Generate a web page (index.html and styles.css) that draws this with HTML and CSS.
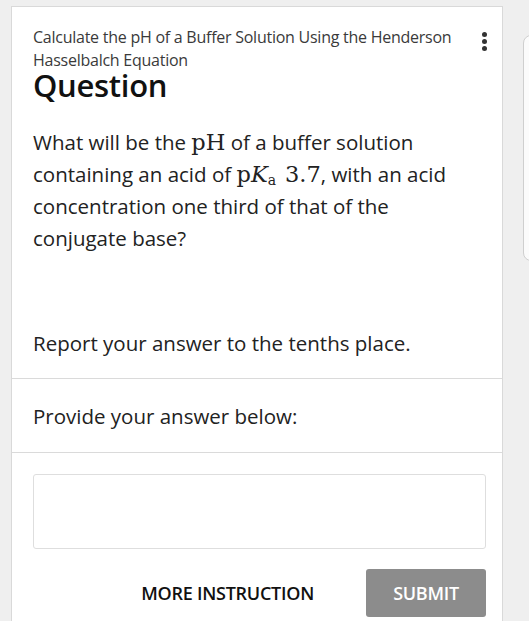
FILE: index.html
```html
<!DOCTYPE html>
<html lang="en">
<head>
    <meta charset="UTF-8">
    <title>Question</title>
    <link rel="stylesheet" href="styles.css">
</head>
<body>
    <div class="page">
        <!-- Question Card -->
        <div class="card">
            <div class="card-head">
                <div class="head-text">
                    <div class="topic">Calculate the pH of a Buffer Solution Using the Henderson Hasselbalch Equation</div>
                    <h1>Question</h1>
                </div>
                <div class="kebab"><span></span><span></span><span></span></div>
            </div>

            <div class="section prompt">
                <p class="question">What will be the <span class="math">pH</span> of a buffer solution containing an acid of <span class="math">p<i>K</i><sub>a</sub><span class="num">3.7</span></span>, with an acid concentration one third of that of the conjugate base?</p>
                <p class="note">Report your answer to the tenths place.</p>
            </div>

            <div class="section label-row">
                <p>Provide your answer below:</p>
            </div>

            <div class="section answer">
                <div class="answer-box"></div>
                <div class="actions">
                    <button class="link-btn">MORE INSTRUCTION</button>
                    <button class="submit-btn">SUBMIT</button>
                </div>
            </div>
        </div>

        <!-- Side panel (cut off) -->
        <div class="side-panel"></div>
    </div>
</body>
</html>
```

FILE: styles.css
```css
/* Global */
body {
    margin: 0;
    padding: 0;
    background: #efefef;
    font-family: 'Open Sans', 'Noto Sans', sans-serif;
    color: #222;
    overflow: hidden;
}

.page {
    display: flex;
    align-items: flex-start;
    padding: 6px 0 0 11px;
    gap: 20px;
}

/* Card */
.card {
    background: #fff;
    width: 490px;
    flex-shrink: 0;
    border: 1px solid #d9d9d9;
    border-bottom: none;
    min-height: 640px;
}

.card-head {
    display: flex;
    justify-content: space-between;
    padding: 19px 15px 0 21px;
}

.topic {
    font-size: 16px;
    letter-spacing: -0.25px;
    line-height: 23px;
    color: #3a3a3a;
    width: 430px;
}

.card-head h1 {
    margin: -4px 0 0 0;
    font-size: 31px;
    font-weight: 600;
    line-height: 34px;
    color: #111;
    letter-spacing: -0.3px;
}

.kebab {
    display: flex;
    flex-direction: column;
    gap: 2px;
    padding-top: 6px;
}

.kebab span {
    width: 5px;
    height: 5px;
    border-radius: 50%;
    background: #333;
}

/* Sections */
.section {
    padding: 0 16px 0 21px;
}

.section p {
    margin: 0;
    font-size: 20.5px;
    line-height: 32px;
}

.prompt {
    padding-top: 24px;
    padding-bottom: 19px;
    border-bottom: 1px solid #dadada;
}

.math {
    font-family: 'DejaVu Serif', 'Liberation Serif', serif;
    font-size: 22.5px;
    line-height: 0;
}

.math sub {
    font-size: 14px;
    vertical-align: -3px;
    line-height: 0;
}

.math .num {
    margin-left: 9px;
}

.note {
    margin-top: 73px !important;
}

.label-row {
    padding-top: 21px;
    padding-bottom: 20px;
    border-bottom: 1px solid #dadada;
}

.answer {
    padding-top: 21px;
}

.answer-box {
    height: 73px;
    border: 1px solid #dedede;
    border-radius: 3px;
}

.actions {
    display: flex;
    justify-content: flex-end;
    align-items: center;
    gap: 52px;
    margin-top: 20px;
}

.link-btn {
    background: none;
    border: none;
    padding: 0;
    font-family: inherit;
    font-size: 18px;
    font-weight: 600;
    letter-spacing: -0.25px;
    color: #111;
}

.submit-btn {
    width: 120px;
    height: 48px;
    background: #8c8c8c;
    border: none;
    border-radius: 3px;
    color: #fff;
    font-family: inherit;
    font-size: 18px;
    font-weight: 600;
    letter-spacing: -0.3px;
}

/* Right side panel */
.side-panel {
    margin-top: 29px;
    width: 60px;
    height: 224px;
    background: #fbfbfb;
    border: 1px solid #cfcfcf;
    border-radius: 8px;
    flex-shrink: 0;
}
```
